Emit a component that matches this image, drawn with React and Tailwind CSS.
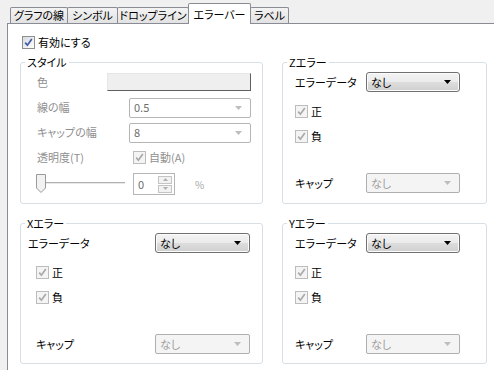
import React from "react";

function Check({ disabled }) {
  return (
    <span
      className={
        disabled
          ? "w-[13px] h-[13px] border border-[#bcbcbc] bg-[#f4f4f4] flex items-center justify-center shrink-0"
          : "w-[13px] h-[13px] border border-[#8e8f8f] bg-[linear-gradient(135deg,#d6d9de,#ffffff)] flex items-center justify-center shrink-0"
      }
    >
      <svg width="9" height="9" viewBox="0 0 9 9">
        <path
          d="M1.2 4.6 L3.4 7.2 L7.8 1"
          stroke={disabled ? "#a9a9a9" : "#4058a6"}
          strokeWidth="1.7"
          fill="none"
        />
      </svg>
    </span>
  );
}

function Arrow({ color }) {
  return (
    <svg width="7" height="4" viewBox="0 0 7 4" className="shrink-0">
      <path d="M0 0 H7 L3.5 4 Z" fill={color} />
    </svg>
  );
}

function ComboEnabled({ className }) {
  return (
    <div
      className={
        "h-[20px] border border-[#707070] rounded-[3px] bg-[linear-gradient(#f3f3f3_0%,#ebebeb_50%,#dddddd_50%,#d0d0d0_100%)] shadow-[inset_0_0_0_1px_#fcfcfc] flex items-center justify-between pl-[4px] pr-[8px] text-black " +
        className
      }
    >
      <span>なし</span>
      <Arrow color="#000" />
    </div>
  );
}

function ComboDisabled({ className, value }) {
  return (
    <div
      className={
        "h-[20px] border border-[#afafaf] rounded-[2px] bg-[#f4f4f4] flex items-center justify-between pl-[4px] pr-[8px] text-[#a0a0a0] " +
        className
      }
    >
      <span>{value}</span>
      <Arrow color="#bdbdbd" />
    </div>
  );
}

function ComboEdit({ value }) {
  return (
    <div className="ml-[22px] w-[122px] h-[20px] border border-[#b5b5b5] rounded-[2px] bg-white flex items-center justify-between pl-[4px] pr-[8px] text-[#6d6d6d]">
      <span>{value}</span>
      <Arrow color="#bdbdbd" />
    </div>
  );
}

function Group({ title, children }) {
  return (
    <fieldset className="h-full border border-[#d5dfe5] rounded-[3px] min-w-0">
      <legend className="ml-[4px] px-[2px] leading-[14px] text-black">{title}</legend>
      {children}
    </fieldset>
  );
}

function ErrorGroup({ title, labelPad, labelW, checkPad, capPad, capW, comboW }) {
  return (
    <Group title={title}>
      <div className={"h-[26px] flex items-center " + labelPad}>
        <span className={"shrink-0 whitespace-nowrap " + labelW}>エラーデータ</span>
        <ComboEnabled className={comboW} />
      </div>
      <div className={"mt-[4px] h-[25px] flex items-center gap-[3px] " + checkPad}>
        <Check disabled />
        <span>正</span>
      </div>
      <div className={"h-[25px] flex items-center gap-[3px] " + checkPad}>
        <Check disabled />
        <span>負</span>
      </div>
      <div className={"mt-[21px] h-[26px] flex items-center " + capPad}>
        <span className={"shrink-0 whitespace-nowrap " + capW}>キャップ</span>
        <ComboDisabled className={comboW} value="なし" />
      </div>
    </Group>
  );
}

function Tab({ label, className }) {
  return (
    <div
      className={
        "h-[16px] border border-b-0 border-[#898c95] rounded-t-[2px] bg-[linear-gradient(#f3f3f3,#e2e2e2)] flex items-center justify-center leading-none whitespace-nowrap overflow-hidden " +
        className
      }
    >
      {label}
    </div>
  );
}

export default function App() {
  return (
    <div className="w-[494px] h-[370px] overflow-hidden bg-[#f0f0f0] text-[11px] text-black font-['Noto_Sans_CJK_JP','Noto_Sans',sans-serif] [font-feature-settings:'palt']">
      <div className="h-[23px] flex items-end pl-[10px] relative z-10">
        <Tab label="グラフの線" className="w-[58px]" />
        <Tab label="シンボル" className="-ml-px w-[51px]" />
        <Tab label="ドロップライン" className="-ml-px w-[72px]" />
        <div className="-ml-px w-[63px] h-[21px] -mb-px border border-b-0 border-[#898c95] rounded-t-[2px] bg-white flex items-center justify-center leading-none whitespace-nowrap relative z-10">
          エラーバー
        </div>
        <Tab label="ラベル" className="-ml-px w-[39px]" />
      </div>
      <div className="ml-[7px] h-[400px] bg-white border-l border-t border-[#898c95]">
        <div className="mt-[11px] h-[14px] pl-[14px] flex items-center gap-[3px]">
          <Check />
          <span>有効にする</span>
        </div>
        <div className="mt-[6px] pl-[12px] grid grid-cols-[243px_205px] grid-rows-[149px_148px] gap-x-[19px] gap-y-[12px]">
          <Group title="スタイル">
            <div className="text-[#8f8f8f]">
              <div className="h-[26px] flex items-center pl-[16px]">
                <span className="w-[70px] shrink-0">色</span>
                <div className="w-[144px] h-[18px] bg-[#efefef] border border-t-[#e6e6e6] border-l-[#e6e6e6] border-r-[#5f5f5f] border-b-[#5f5f5f]" />
              </div>
              <div className="h-[25px] flex items-center pl-[16px]">
                <span className="w-[70px] shrink-0">線の幅</span>
                <ComboEdit value="0.5" />
              </div>
              <div className="h-[25px] flex items-center pl-[16px]">
                <span className="w-[70px] shrink-0 whitespace-nowrap">キャップの幅</span>
                <ComboEdit value="8" />
              </div>
              <div className="h-[25px] flex items-center pl-[16px]">
                <span className="w-[70px] shrink-0">透明度(T)</span>
                <div className="ml-[26px] flex items-center gap-[3px]">
                  <Check disabled />
                  <span className="text-[#8f8f8f]">自動(A)</span>
                </div>
              </div>
              <div className="h-[28px] flex items-center pl-[15px]">
                <svg width="90" height="20" viewBox="0 0 90 20" className="shrink-0">
                  <line x1="5" y1="8.5" x2="89" y2="8.5" stroke="#b0b0b0" strokeWidth="1" />
                  <line x1="5" y1="9.5" x2="89" y2="9.5" stroke="#e8e8e8" strokeWidth="1" />
                  <path d="M0.5 0.5 H9.5 V14 L5 18.5 L0.5 14 Z" fill="#f2f2f2" stroke="#9a9a9a" />
                </svg>
                <div className="ml-[7px] w-[42px] h-[22px] border border-[#b5b5b5] bg-white flex items-center justify-between pl-[4px] pr-[2px]">
                  <span className="text-[#6d6d6d]">0</span>
                  <div className="flex flex-col gap-px">
                    <div className="w-[14px] h-[8px] border border-[#c4c4c4] bg-[#f2f2f2] flex items-center justify-center">
                      <svg width="5" height="3" viewBox="0 0 5 3"><path d="M0 3 L2.5 0 L5 3 Z" fill="#b0b0b0" /></svg>
                    </div>
                    <div className="w-[14px] h-[8px] border border-[#c4c4c4] bg-[#f2f2f2] flex items-center justify-center">
                      <svg width="5" height="3" viewBox="0 0 5 3"><path d="M0 0 L5 0 L2.5 3 Z" fill="#b0b0b0" /></svg>
                    </div>
                  </div>
                </div>
                <span className="ml-[20px] text-[#a8a8a8] text-[10px]">%</span>
              </div>
            </div>
          </Group>
          <ErrorGroup
            title="Zエラー"
            labelPad="pl-[12px]"
            labelW="w-[71px]"
            checkPad="pl-[12px]"
            capPad="pl-[12px]"
            capW="w-[71px]"
            comboW="w-[94px]"
          />
          <ErrorGroup
            title="Xエラー"
            labelPad="pl-[7px]"
            labelW="w-[127px]"
            checkPad="pl-[15px]"
            capPad="pl-[15px]"
            capW="w-[119px]"
            comboW="w-[95px]"
          />
          <ErrorGroup
            title="Yエラー"
            labelPad="pl-[12px]"
            labelW="w-[71px]"
            checkPad="pl-[12px]"
            capPad="pl-[12px]"
            capW="w-[71px]"
            comboW="w-[94px]"
          />
        </div>
      </div>
    </div>
  );
}
